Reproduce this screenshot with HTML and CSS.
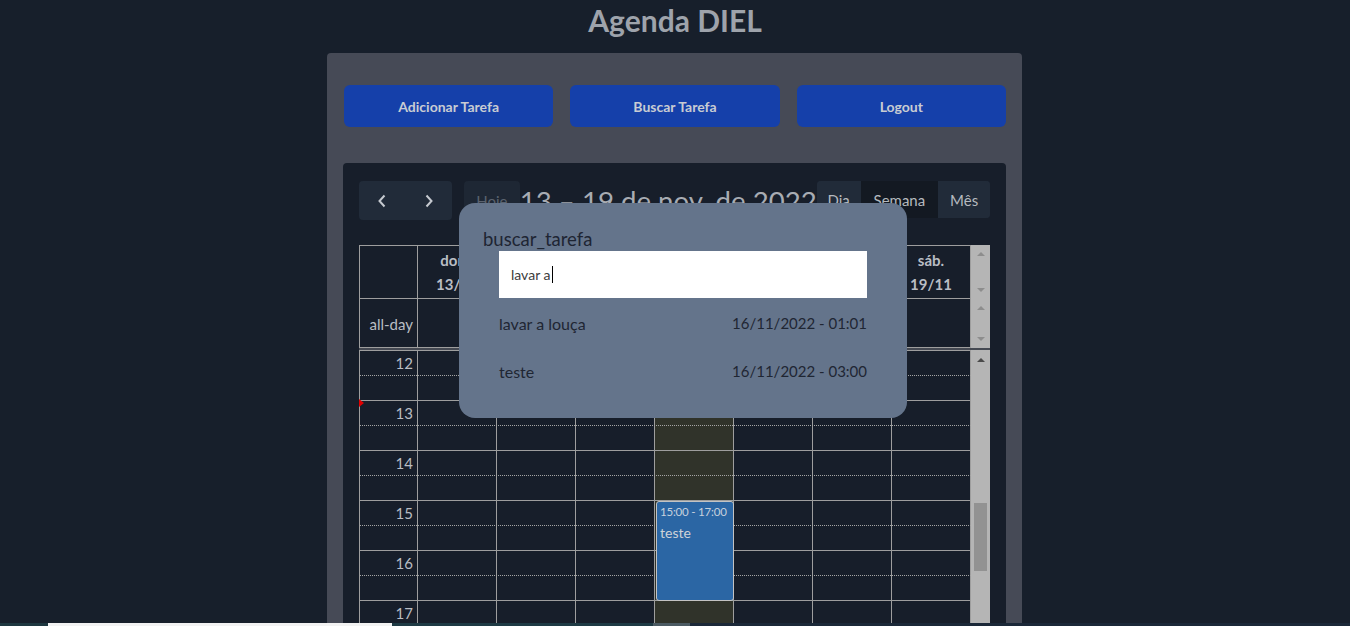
FILE: index.html
```html
<!DOCTYPE html>
<html lang="pt-BR">
<head>
<meta charset="utf-8">
<title>Agenda DIEL</title>
<link rel="stylesheet" href="styles.css">
</head>
<body>
<h1 class="app-title">Agenda DIEL</h1>
<main class="panel">
  <div class="actions">
    <button class="action-btn">Adicionar Tarefa</button>
    <button class="action-btn">Buscar Tarefa</button>
    <button class="action-btn">Logout</button>
  </div>
  <section class="calendar">
    <div class="toolbar">
      <div class="nav-group">
        <button class="nav-btn" aria-label="anterior"><svg width="10" height="14" viewBox="0 0 10 14"><path d="M7.5 1.5 L2.5 7 L7.5 12.5" fill="none" stroke="#c6cad0" stroke-width="2"/></svg></button>
        <button class="nav-btn" aria-label="próximo"><svg width="10" height="14" viewBox="0 0 10 14"><path d="M2.5 1.5 L7.5 7 L2.5 12.5" fill="none" stroke="#c6cad0" stroke-width="2"/></svg></button>
      </div>
      <button class="today-btn">Hoje</button>
      <h2 class="range">13 – 19 de nov. de 2022</h2>
      <div class="view-group">
        <button class="view-btn view-dia">Dia</button>
        <button class="view-btn view-semana active">Semana</button>
        <button class="view-btn view-mes">Mês</button>
      </div>
    </div>

    <div class="grid">
      <div class="grid-row">
        <div class="head-cells">
          <div class="hcell"></div>
          <div class="hcell"><span>dom.</span><span>13/11</span></div>
          <div class="hcell"><span>seg.</span><span>14/11</span></div>
          <div class="hcell"><span>ter.</span><span>15/11</span></div>
          <div class="hcell"><span>qua.</span><span>16/11</span></div>
          <div class="hcell"><span>qui.</span><span>17/11</span></div>
          <div class="hcell"><span>sex.</span><span>18/11</span></div>
          <div class="hcell"><span>sáb.</span><span>19/11</span></div>
        </div>
        <div class="sb sb-pair"><i class="arr up"></i><i class="arr down"></i></div>
      </div>
      <div class="grid-row">
        <div class="allday-cells">
          <div class="acell label">all-day</div>
          <div class="acell"></div>
          <div class="acell"></div>
          <div class="acell"></div>
          <div class="acell today"></div>
          <div class="acell"></div>
          <div class="acell"></div>
          <div class="acell"></div>
        </div>
        <div class="sb sb-pair"><i class="arr up"></i><i class="arr down"></i></div>
      </div>
      <div class="divider"></div>
      <div class="grid-row">
        <div class="body-grid">
          <div class="col c1"></div>
          <div class="col c2"></div>
          <div class="col c3"></div>
          <div class="col c4"></div>
          <div class="col c5 today"></div>
          <div class="col c6"></div>
          <div class="col c7"></div>
          <div class="col c8"></div>

          <div class="line half r1"></div><div class="line r2"></div>
          <div class="line half r3"></div><div class="line r4"></div>
          <div class="line half r5"></div><div class="line r6"></div>
          <div class="line half r7"></div><div class="line r8"></div>
          <div class="line half r9"></div><div class="line r10"></div>
          <div class="line half r11"></div><div class="line r12"></div>
          <div class="line half r13"></div><div class="line r14"></div>

          <div class="hour r1">12</div>
          <div class="hour r3">13</div>
          <div class="hour r5">14</div>
          <div class="hour r7">15</div>
          <div class="hour r9">16</div>
          <div class="hour r11">17</div>
          <div class="hour r13">18</div>

          <div class="now-arrow"></div>

          <div class="event">
            <div class="event-time">15:00 - 17:00</div>
            <div class="event-title">teste</div>
          </div>
        </div>
        <div class="sb sb-body"><i class="arr up dark"></i><div class="thumb"></div></div>
      </div>
    </div>
  </section>
</main>

<div class="modal" role="dialog">
  <h3 class="modal-title">buscar_tarefa</h3>
  <div class="search-input">lavar a<span class="caret"></span></div>
  <div class="result"><span class="result-name">lavar a louça</span><span>16/11/2022 - 01:01</span></div>
  <div class="result"><span class="result-name">teste</span><span>16/11/2022 - 03:00</span></div>
</div>

<div class="bottom-strip"></div>
</body>
</html>
```
FILE: styles.css
```css
html, body {
  overflow: hidden;
}
body {
  margin: 0;
  height: 626px;
  background: #171f2b;
  font-family: Lato, "Open Sans", sans-serif;
}
button {
  font-family: inherit;
  border: 0;
  padding: 0;
  cursor: pointer;
}
.app-title {
  margin: 0;
  height: 40px;
  line-height: 40px;
  text-align: center;
  font-size: 30px;
  font-weight: 700;
  color: #9ea3ab;
}
.panel {
  width: 695px;
  margin: 13px 0 0 calc(50% - 348px);
  box-sizing: border-box;
  padding: 32px 16px 0 16px;
  background: #464a56;
  border-radius: 4px;
  min-height: 700px;
}
.actions {
  display: grid;
  grid-template-columns: repeat(3, 1fr);
  gap: 17px;
  padding-left: 1px;
}
.action-btn {
  height: 42px;
  border-radius: 6px;
  background: #1540aa;
  color: #c8ccd3;
  font-size: 14px;
  font-weight: 700;
}
.calendar {
  margin-top: 36px;
  background: #171e2a;
  border-radius: 4px;
  padding: 18px 16px;
  min-height: 600px;
}
.toolbar {
  display: flex;
  align-items: center;
  height: 39px;
}
.nav-group {
  display: flex;
  background: #212b39;
  border-radius: 4px;
  height: 39px;
}
.nav-btn {
  width: 46.5px;
  height: 39px;
  background: transparent;
  display: flex;
  align-items: center;
  justify-content: center;
}
.today-btn {
  margin-left: 12px;
  width: 56px;
  height: 39px;
  background: #1e2734;
  color: #5b636f;
  border-radius: 4px;
  font-size: 15px;
}
.range {
  flex: 1;
  margin: 0;
  text-align: center;
  white-space: nowrap;
  font-size: 27.6px;
  font-weight: 400;
  color: #a8acb3;
}
.view-group {
  display: flex;
  height: 37px;
  border-radius: 4px;
  overflow: hidden;
  background: #212b39;
  margin-top: -2px;
}
.view-btn {
  height: 37px;
  background: #212b39;
  color: #b5b9bf;
  font-size: 15px;
}
.view-dia { width: 44px; }
.view-semana { width: 78px; }
.view-mes { width: 52px; }
.view-btn.active { background: #131922; }

/* grid */
.grid {
  margin-top: 25px;
  width: 632px;
}
.grid-row {
  display: flex;
}
.head-cells,
.allday-cells {
  display: grid;
  grid-template-columns: 58px repeat(7, 79px);
  border-left: 1px solid #9e9e9e;
}
.head-cells {
  border-top: 1px solid #9e9e9e;
}
.hcell,
.acell {
  box-sizing: border-box;
  border-right: 1px solid #9e9e9e;
  border-bottom: 1px solid #9e9e9e;
}
.hcell {
  height: 53px;
  display: flex;
  flex-direction: column;
  justify-content: center;
  align-items: center;
  font-size: 15px;
  font-weight: 700;
  line-height: 24px;
  color: #b9bdc4;
}
.acell {
  height: 49px;
}
.acell.label {
  display: flex;
  align-items: center;
  justify-content: flex-end;
  padding: 2px 4px 0 0;
  font-size: 15px;
  color: #b9bdc3;
}
.today {
  background: #30332a;
}
.sb {
  width: 19px;
  background: #b5b5b5;
  display: flex;
  flex-direction: column;
  align-items: center;
}
.sb-pair {
  justify-content: space-between;
  padding: 7px 0 7px;
  box-sizing: border-box;
}
.arr {
  display: block;
  width: 0;
  height: 0;
  border-left: 4px solid transparent;
  border-right: 4px solid transparent;
}
.arr.up { border-bottom: 4px solid #8d8d8d; }
.arr.down { border-top: 4px solid #8d8d8d; }
.arr.up.dark { border-bottom-color: #4a4a4a; }
.divider {
  width: 631px;
  height: 2px;
  background: #454952;
}
.body-grid {
  display: grid;
  grid-template-columns: 58px repeat(7, 79px);
  grid-template-rows: repeat(14, 25px);
  border-left: 1px solid #9e9e9e;
  border-top: 1px solid #9e9e9e;
}
.col {
  grid-row: 1 / -1;
  border-right: 1px solid #9e9e9e;
}
.c1 { grid-column: 1; }
.c2 { grid-column: 2; }
.c3 { grid-column: 3; }
.c4 { grid-column: 4; }
.c5 { grid-column: 5; }
.c6 { grid-column: 6; }
.c7 { grid-column: 7; }
.c8 { grid-column: 8; }
.line {
  grid-column: 1 / -1;
  box-sizing: border-box;
  border-bottom: 1px solid #9e9e9e;
}
.line.half {
  border-bottom: 1px dotted #a5a5a5;
}
.r1 { grid-row: 1; }
.r2 { grid-row: 2; }
.r3 { grid-row: 3; }
.r4 { grid-row: 4; }
.r5 { grid-row: 5; }
.r6 { grid-row: 6; }
.r7 { grid-row: 7; }
.r8 { grid-row: 8; }
.r9 { grid-row: 9; }
.r10 { grid-row: 10; }
.r11 { grid-row: 11; }
.r12 { grid-row: 12; }
.r13 { grid-row: 13; }
.r14 { grid-row: 14; }
.hour {
  grid-column: 1;
  justify-self: end;
  align-self: center;
  padding-right: 5px;
  margin-top: -2px;
  font-size: 15px;
  color: #b9bdc3;
  line-height: 24px;
}
.now-arrow {
  grid-column: 1;
  grid-row: 3;
  align-self: start;
  justify-self: start;
  margin-left: -1px;
  margin-top: -2px;
  width: 0;
  height: 0;
  border-left: 5px solid #e00000;
  border-top: 4px solid transparent;
  border-bottom: 4px solid transparent;
}
.event {
  grid-column: 5;
  grid-row: 7 / 11;
  margin: 0 0 0 1px;
  box-sizing: border-box;
  background: #2b66a4;
  border: 1px solid #c3c3c3;
  border-radius: 3px;
  padding: 2px 3px;
  z-index: 1;
  overflow: hidden;
}
.event-time {
  white-space: nowrap;
  font-size: 11.5px;
  letter-spacing: -0.2px;
  line-height: 16px;
  color: #c6d0dc;
}
.event-title {
  margin-top: 4px;
  font-size: 14px;
  line-height: 18px;
  color: #cfd3d8;
}
.sb-body {
  padding-top: 8px;
  box-sizing: border-box;
}
.thumb {
  margin-top: 141px;
  width: 13px;
  height: 68px;
  background: #929292;
}

/* modal */
.modal {
  position: absolute;
  left: 459px;
  top: 203px;
  width: 448px;
  height: 215px;
  box-sizing: border-box;
  padding: 25px 40px 0;
  background: #64748b;
  border-radius: 16px;
}
.modal-title {
  margin: 0 0 0 -16px;
  font-size: 18.5px;
  line-height: 23px;
  font-weight: 400;
  color: #1e2533;
}
.search-input {
  height: 47px;
  background: #ffffff;
  padding-left: 12px;
  display: flex;
  align-items: center;
  font-size: 14px;
  color: #3c3c3c;
}
.caret {
  display: inline-block;
  width: 1px;
  height: 17px;
  margin-left: 1px;
  background: #000;
}
.result {
  display: flex;
  justify-content: space-between;
  align-items: center;
  height: 48px;
  padding-top: 2px;
  box-sizing: border-box;
  font-size: 15px;
  color: #1f2633;
}
.result-name {
  font-size: 16px;
}

.bottom-strip {
  position: fixed;
  left: 0;
  right: 0;
  bottom: 0;
  height: 3px;
  background: linear-gradient(to right, #1e3740 0 48px, #f2f2f2 48px 392px, #1e3a44 392px 653px, #4b5a62 653px 690px, #1b2838 690px);
}
```
